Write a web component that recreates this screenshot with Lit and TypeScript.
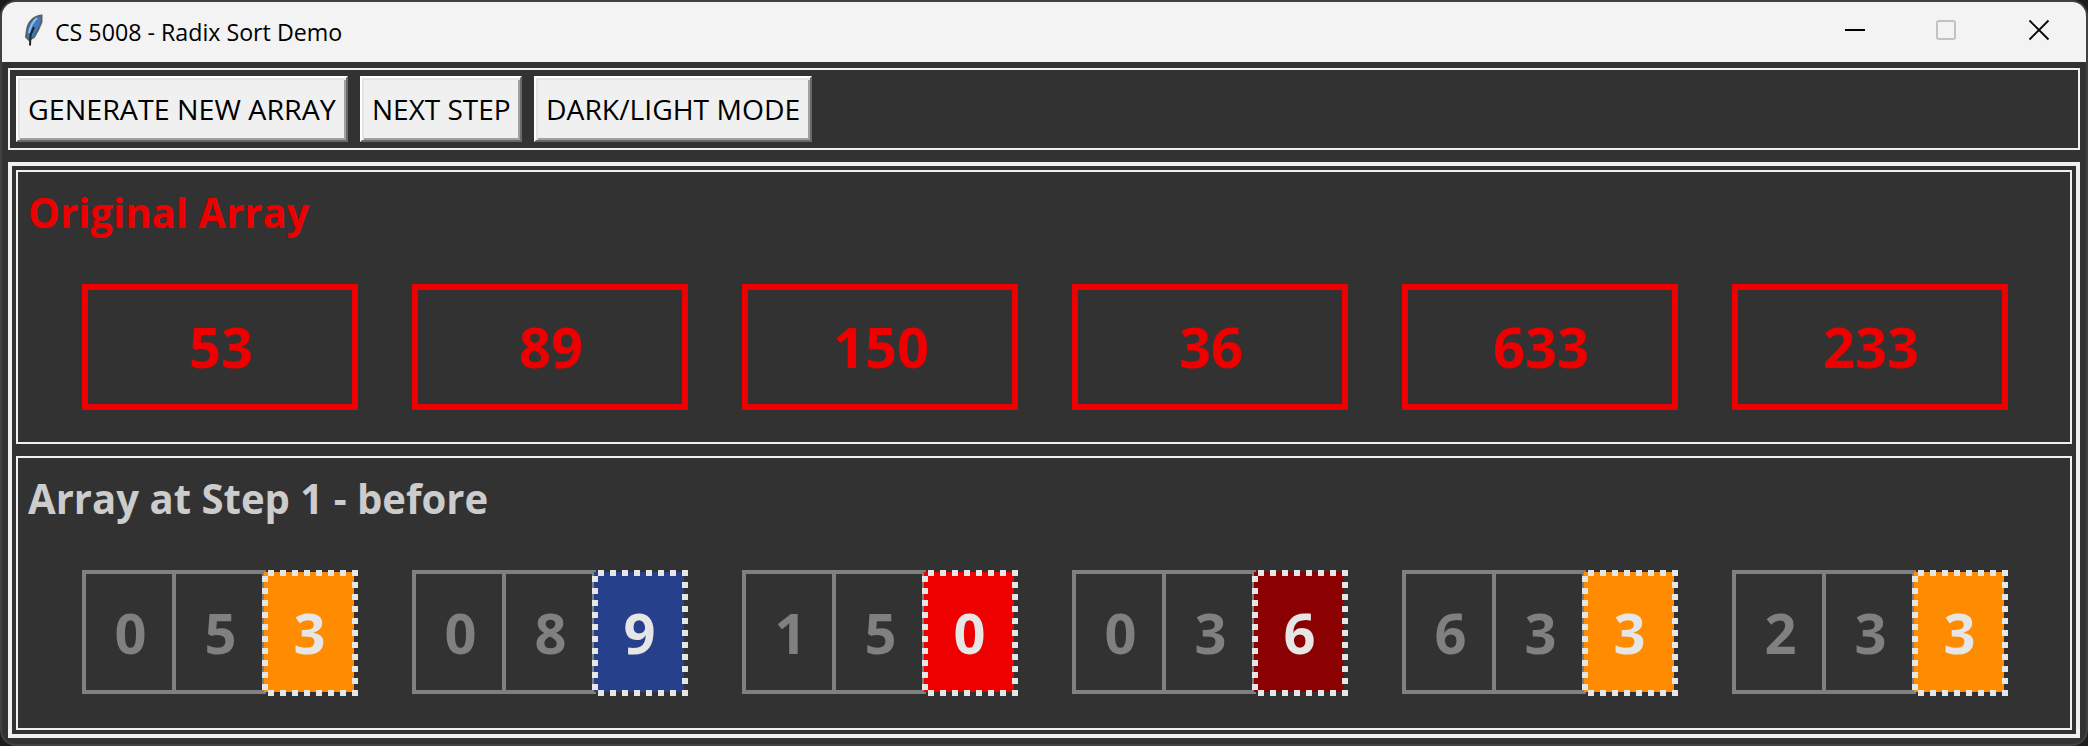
import { LitElement, html, css, svg } from "lit";
import { customElement, property } from "lit/decorators.js";

const DIGIT_COLORS: Record<string, string> = {
  "0": "red", "3": "orange", "6": "maroon", "9": "blue",
};

@customElement("digit-box")
class DigitBox extends LitElement {
  @property() value = "000";
  static styles = css`
    :host { display: flex; width: 276px; height: 126px; align-items: flex-start; }
    .cell { box-sizing: border-box; width: 90px; height: 124px; border: 4px solid #808080; border-left-width: 0; color: #808080; display: flex; justify-content: center; align-items: center; }
    .first { width: 94px; border-left-width: 4px; }
    .active { position: relative; width: 96px; height: 126px; margin-left: -4px; color: #e6e6e6; display: flex; justify-content: center; align-items: center; }
    .overlay { position: absolute; inset: 0; display: block; }
    .digit { position: relative; line-height: 76px; padding: 0 0 0 3px; }
    .active .digit { padding: 0 1px 2px 0; }
    .red { fill: #ee0000; } .orange { fill: #ff8c00; } .maroon { fill: #8b0000; } .blue { fill: #27408b; }
    .dots { fill: #e6e6e6; }
  `;
  render() {
    const [a, b, c] = this.value.split("");
    const across = Array.from({ length: 8 }, (_, i) => 6 + i * 12);
    const left = Array.from({ length: 10 }, (_, i) => 6 + i * 12);
    const right = Array.from({ length: 11 }, (_, i) => i * 12);
    const dot = (x: number, y: number) => svg`<rect x=${x} y=${y} width="6" height="6"></rect>`;
    return html`<div class="cell first"><span class="digit">${a}</span></div>
      <div class="cell"><span class="digit">${b}</span></div>
      <div class="active">
        <svg class="overlay" width="96" height="126">
          <rect class=${DIGIT_COLORS[c]} x="2" y="2" width="90" height="120"></rect>
          <g class="dots">
            ${across.map((x) => svg`${dot(x, 0)}${dot(x, 120)}`)}
            ${left.map((y) => dot(0, y))}${right.map((y) => dot(90, y))}
          </g>
        </svg>
        <span class="digit">${c}</span>
      </div>`;
  }
}

@customElement("app-root")
class AppRoot extends LitElement {
  static styles = css`
    :host { display: block; box-sizing: border-box; width: 2088px; height: 746px; background: #1c1c1c; overflow: hidden; font-family: "Open Sans", "Noto Sans", sans-serif; }
    .window { box-sizing: border-box; height: 746px; background: #323232; border: 2px solid #404040; border-radius: 16px; overflow: hidden; }
    .titlebar { height: 60px; background: #f3f3f3; display: flex; align-items: center; color: #000; }
    .feather { margin: 0 0 2px 22px; }
    .title { margin-left: 11px; font-size: 24px; line-height: 34px; padding-bottom: 1px; white-space: nowrap; flex: 1; transform: scaleX(0.967); transform-origin: 0 50%; }
    .fit { display: inline-block; white-space: nowrap; transform-origin: 0 50%; }
    .controls { display: block; }
    .body { padding: 6px; display: flex; flex-direction: column; gap: 12px; }
    .toolbar { box-sizing: border-box; height: 82px; border: 2px solid #f0f0f0; padding: 6px; display: flex; gap: 12px; }
    .btn { box-sizing: border-box; height: 66px; border: 2px solid; border-color: #fff #696969 #696969 #fff; box-shadow: inset 2px 2px #e3e3e3, inset -2px -2px #a0a0a0; background: #f0f0f0; border-radius: 0; padding: 0 0 0 10px; margin: 0; font: 28px "Open Sans", sans-serif; color: #000; text-align: left; overflow: hidden; }
    .b1 { width: 332px; } .b2 { width: 162px; } .b3 { width: 278px; }
    .b1 .fit { transform: scaleX(1.022); }
    .b3 .fit { transform: scaleX(1.01); }
    .panels { box-sizing: border-box; height: 576px; border: 4px solid #f0f0f0; padding: 4px; display: flex; flex-direction: column; gap: 12px; }
    .panel { box-sizing: border-box; height: 274px; border: 2px solid #f0f0f0; padding: 8px 0 0 10px; }
    .heading { margin: 0; height: 64px; line-height: 64px; font-size: 42px; font-weight: 700; }
    .heading .fit { transform: scaleX(0.954); }
    .original { color: #ee0000; } .step { color: #cccccc; }
    .row { display: flex; gap: 54px; padding: 40px 0 0 54px; font-size: 56px; font-weight: 700; }
    .box { box-sizing: border-box; width: 276px; height: 126px; border: 6px solid #ee0000; color: #ee0000; display: flex; justify-content: center; align-items: center; line-height: 76px; padding: 0 0 2px 2px; }
  `;
  render() {
    return html`<div class="window">
      <header class="titlebar">
        <svg class="feather" width="20" height="34" viewBox="0 0 20 34">
          <path d="M17.500 1.500 C10 2 4 8 3 16 L2 23 L5 26 L10 23 L14 16 L17.500 8Z" fill="#3b7cc4" stroke="#5a6068" stroke-width="2"/>
          <path d="M13 4 Q7 9 5 19" stroke="#8fbfee" stroke-width="2" fill="none"/>
          <path d="M10 13 L6.500 21 L6 31.500" stroke="#222" stroke-width="2" fill="none"/>
        </svg>
        <div class="title">CS 5008 - Radix Sort Demo</div>
        <svg class="controls" width="260" height="60" viewBox="0 0 260 60">
          <path d="M19 28H39" stroke="#000" stroke-width="2"/>
          <rect x="111" y="19" width="18" height="18" rx="2" fill="none" stroke="#c2c2c2" stroke-width="2"/>
          <path d="M203.500 18.500L222.500 37.500M222.500 18.500L203.500 37.500" stroke="#000" stroke-width="1.800"/>
        </svg>
      </header>
      <main class="body">
        <div class="toolbar">
          <button class="btn b1"><span class="fit">GENERATE NEW ARRAY</span></button>
          <button class="btn b2"><span class="fit">NEXT STEP</span></button>
          <button class="btn b3"><span class="fit">DARK/LIGHT MODE</span></button>
        </div>
        <div class="panels">
          <section class="panel">
            <h2 class="heading original"><span class="fit">Original Array</span></h2>
            <div class="row">${[53, 89, 150, 36, 633, 233].map((n) => html`<div class="box">${n}</div>`)}</div>
          </section>
          <section class="panel">
            <h2 class="heading step"><span class="fit">Array at Step 1 - before</span></h2>
            <div class="row">${["053", "089", "150", "036", "633", "233"].map((n) => html`<digit-box value=${n}></digit-box>`)}</div>
          </section>
        </div>
      </main>
    </div>`;
  }
}
